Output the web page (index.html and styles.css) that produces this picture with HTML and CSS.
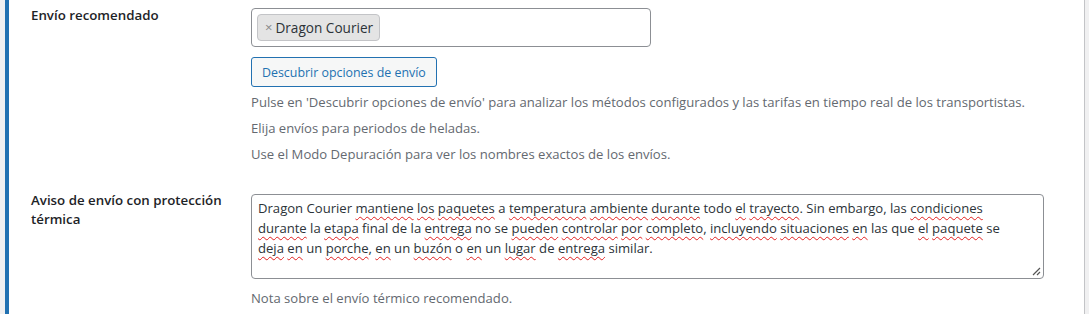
FILE: index.html
```html
<!DOCTYPE html>
<html lang="es">
<head>
  <meta charset="UTF-8">
  <title>Envío</title>
  <link rel="stylesheet" href="styles.css">
</head>
<body>
  <div class="panel">
    <div class="row row-first">
      <div class="label">Envío recomendado</div>
      <div class="field">
        <div class="select">
          <span class="token"><span class="token-x">×</span>Dragon Courier</span>
        </div>
        <button class="btn">Descubrir opciones de envío</button>
        <p class="description">Pulse en 'Descubrir opciones de envío' para analizar los métodos configurados y las tarifas en tiempo real de los transportistas.</p>
        <p class="description">Elija envíos para periodos de heladas.</p>
        <p class="description">Use el Modo Depuración para ver los nombres exactos de los envíos.</p>
      </div>
    </div>
    <div class="row row-second">
      <div class="label">Aviso de envío con protección térmica</div>
      <div class="field">
        <div class="textarea">Dragon Courier <span class="sp">mantiene</span> <span class="sp">los</span> <span class="sp">paquetes</span> a <span class="sp">temperatura</span> <span class="sp">ambiente</span> <span class="sp">durante</span> todo <span class="sp">el</span> <span class="sp">trayecto</span>. Sin embargo, las <span class="sp">condiciones</span> <span class="sp">durante</span> la <span class="sp">etapa</span> final de la <span class="sp">entrega</span> no se <span class="sp">pueden</span> <span class="sp">controlar</span> <span class="sp">por</span> <span class="sp">completo</span>, <span class="sp">incluyendo</span> <span class="sp">situaciones</span> <span class="sp">en</span> las que <span class="sp">el</span> <span class="sp">paquete</span> se <span class="sp">deja</span> <span class="sp">en</span> un <span class="sp">porche</span>, <span class="sp">en</span> un <span class="sp">buzón</span> o <span class="sp">en</span> un <span class="sp">lugar</span> de <span class="sp">entrega</span> similar.
          <svg class="grip" width="9" height="9" viewBox="0 0 9 9"><path d="M8 1 L1 8 M8 5 L5 8" stroke="#555" stroke-width="1.2" fill="none"/></svg>
        </div>
        <p class="description note">Nota sobre el envío térmico recomendado.</p>
      </div>
    </div>
  </div>
</body>
</html>
```

FILE: styles.css
```css
* { box-sizing: border-box; }

html, body {
  margin: 0;
  padding: 0;
  background: #f0f0f1;
  font-family: 'Open Sans', sans-serif;
  font-size: 13.1px;
  color: #1d2327;
  overflow: hidden;
}

.panel {
  margin-left: 5px;
  width: 1080px;
  height: 330px;
  background: #fff;
  border-left: 4px solid #2271b1;
  border-right: 1px solid #c3c4c7;
  padding-left: 22px;
}

.row {
  display: flex;
  align-items: flex-start;
}

.row-first {
  padding-top: 8px;
}

.row-second {
  padding-top: 25px;
}

.label {
  width: 220px;
  flex: none;
  padding-right: 20px;
  font-size: 13.3px;
  font-weight: 600;
  line-height: 19px;
  color: #1d2327;
}

.row-first .label {
  margin-top: -2px;
}

.row-second .label {
  margin-top: -3px;
}

.field {
  flex: 1;
}

.select {
  width: 400px;
  height: 39px;
  border: 1px solid #8c8f94;
  border-radius: 4px;
  padding: 5px;
}

.token {
  display: inline-flex;
  align-items: center;
  height: 27px;
  padding: 0 6px 0 7px;
  background: #e4e4e4;
  border: 1px solid #c3c4c7;
  border-radius: 4px;
  color: #2c3338;
  font-size: 13.6px;
  line-height: 25px;
}

.token-x {
  color: #888;
  font-size: 13px;
  margin-right: 3px;
}

.btn {
  display: block;
  margin-top: 10px;
  height: 30px;
  padding: 0 10px;
  background: #f6f7f7;
  border: 1px solid #2271b1;
  border-radius: 3px;
  color: #2271b1;
  font-family: inherit;
  font-size: 12.4px;
}

.description {
  margin: 5px 0 4px;
  line-height: 21px;
  color: #646970;
}

.textarea {
  position: relative;
  width: 793px;
  height: 85px;
  border: 1px solid #8c8f94;
  border-radius: 4px;
  padding: 3px 20px 3px 6px;
  line-height: 20px;
  color: #2c3338;
}

.sp {
  text-decoration: underline wavy #e02020;
  text-decoration-thickness: 1px;
  text-underline-offset: 3px;
}

.grip {
  position: absolute;
  right: 2px;
  bottom: 2px;
}

.note {
  margin-top: 9px;
}
```
